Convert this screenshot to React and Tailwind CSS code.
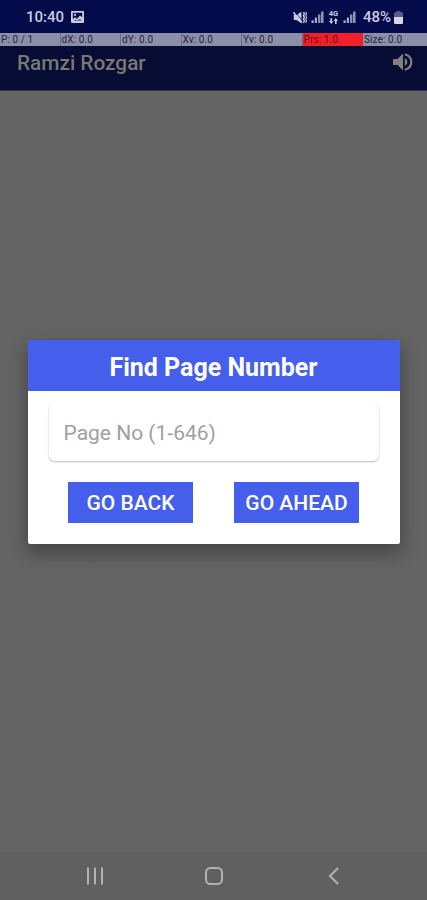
const pointerStats = [
  { label: "P: 0 / 1" },
  { label: "dX: 0.0" },
  { label: "dY: 0.0" },
  { label: "Xv: 0.0" },
  { label: "Yv: 0.0" },
  { label: "Prs: 1.0", active: true },
  { label: "Size: 0.0" },
];

const ImageIcon = () => (
  <svg className="ml-[7px] w-[13px] h-[12px]" viewBox="0 0 13 12">
    <rect width="13" height="12" rx="1" fill="#c9cce0" />
    <path d="M1.8 1.8h9.4v4.4L9 4.6 6 8 4 6.3 1.8 8.2z" fill="#050c49" />
    <rect x="3" y="2.8" width="2" height="2" fill="#c9cce0" />
    <path d="M2.6 10l2-1.6 1.5 1L9 7.4l1.8 2.6z" fill="#050c49" opacity="0.5" />
  </svg>
);

const MuteVibrateIcon = () => (
  <svg className="w-[14px] h-[13px]" viewBox="0 0 14 13" fill="none">
    <path d="M0.8 4h2.7L8.4 0.8v11.4L3.5 9H0.8z" fill="#c9cce0" />
    <path d="M0.4 1.2l8.6 10.6" stroke="#c9cce0" strokeWidth="1.6" />
    <path d="M1.8 0.6l7.4 9" stroke="#030b4b" strokeWidth="0.7" />
    <path d="M10.4 1l1 1.8-1 1.8 1 1.8-1 1.8 1 1.8-1 1.8" stroke="#c9cce0" strokeWidth="1.4" />
    <path d="M12.7 1l0.8 1.8-0.8 1.8 0.8 1.8-0.8 1.8 0.8 1.8-0.8 1.8" stroke="#c9cce0" strokeWidth="1.1" />
  </svg>
);

const SignalIcon = () => (
  <svg className="w-[13px] h-[12px]" viewBox="0 0 13 12">
    <path d="M0.5 9.3h2.2V12H0.5zM3.8 6.5h2.2V12H3.8z" fill="#a6aac5" />
    <path d="M7 3.5h2.4V12H7zM10 0.5h2.6V12H10z" fill="#8c91b0" />
  </svg>
);

const DataIcon = () => (
  <div className="w-[11px] h-[13px] flex flex-col items-center">
    <span className="text-[7.5px] leading-[6px] font-bold">4G</span>
    <svg className="w-[9px] h-[6px] mt-[1px]" viewBox="0 0 9 6" fill="#c9cce0">
      <path d="M1.4 0h1.6v3h1.4L2.2 6 0 3h1.4zM6 6h1.6V3H9L6.8 0 4.6 3H6z" />
    </svg>
  </div>
);

const BatteryIcon = () => (
  <svg className="w-[9px] h-[13px]" viewBox="0 0 9 13">
    <path d="M2.5 0h4v1.3H8q1 0 1 1V6H0V2.3q0-1 1-1h1.5z" fill="#555b83" />
    <path d="M0 6h9v6q0 1-1 1H1q-1 0-1-1z" fill="#d5d7e6" />
  </svg>
);

const VolumeIcon = () => (
  <svg className="w-[20px] h-[18px]" viewBox="0 0 20 18">
    <path d="M0 6h4.5L10 0.6v16.8L4.5 12H0z" fill="#7f817d" />
    <path d="M11.8 5v8q2.6-1.2 2.6-4t-2.6-4z" fill="#7f817d" />
    <path d="M11.8 1.2q6.5 1.7 6.5 7.8t-6.5 7.8" fill="none" stroke="#7f817d" strokeWidth="2.2" />
  </svg>
);

const StatusBar = () => (
  <div className="h-[33px] shrink-0 bg-[#030b4b] flex items-center justify-between pl-[26px] pr-[24px] pt-[1px] text-[#c9cce0]">
    <div className="flex items-center">
      <span className="text-[15px] leading-none font-medium w-[38px]">10:40</span>
      <ImageIcon />
    </div>
    <div className="flex items-center">
      <MuteVibrateIcon />
      <span className="w-[4px]" />
      <SignalIcon />
      <span className="w-[4px]" />
      <DataIcon />
      <span className="w-[4px]" />
      <SignalIcon />
      <span className="ml-[7px] w-[31px] text-[15px] leading-none font-medium whitespace-nowrap">48%</span>
      <BatteryIcon />
    </div>
  </div>
);

const FindPageDialog = () => (
  <div className="w-[372px] h-[204px] bg-white rounded-[2px] shadow-[0_8px_18px_2px_rgba(0,0,0,0.3)]">
    <div className="h-[51px] bg-[#455fec] rounded-t-[1px] flex items-center justify-center pt-[4px]">
      <h2 className="text-[25px] leading-none font-bold text-white">Find Page Number</h2>
    </div>

    <div className="pt-[12px] px-[21px]">
      <input
        type="text"
        placeholder="Page No (1-646)"
        className="block w-full h-[58px] px-[15px] pt-[1px] rounded-[6px] bg-white text-[21px] text-[#a0a0a0] placeholder:text-[#a0a0a0] outline-none shadow-[0_1px_2px_rgba(0,0,0,0.28)]"
      />
    </div>

    <div className="mt-[21px] flex justify-center gap-[41px]">
      <button className="w-[125px] h-[41px] pt-[3px] bg-[#455fec] text-white text-[21px] font-medium whitespace-nowrap">GO BACK</button>
      <button className="w-[125px] h-[41px] pt-[3px] bg-[#455fec] text-white text-[21px] font-medium whitespace-nowrap">GO AHEAD</button>
    </div>
  </div>
);

const App = () => {
  return (
    <div className="w-[427px] h-[900px] overflow-hidden flex flex-col bg-[#646464] font-[Roboto,sans-serif]">
      <StatusBar />

      {/* Pointer location strip */}
      <div className="h-[13px] shrink-0 flex bg-[#8d8ea8] text-[10px] leading-[14px] tracking-[0.1px] text-[#25263a]">
        {pointerStats.map((stat) => (
          <div
            key={stat.label}
            className={`w-[60.5px] shrink-0 pl-[1px] border-r whitespace-nowrap last:border-r-0 last:w-auto ${
              stat.active ? "bg-[#ee2029] border-[#ee2029] text-[#6e0f1c]" : "border-[#6c6d89]"
            }`}
          >
            {stat.label}
          </div>
        ))}
      </div>

      {/* App bar */}
      <div className="h-[45px] shrink-0 bg-[#060c33] border-b border-[#33374e] flex justify-between pl-[17px] pr-[14px]">
        <h1 className="pt-[7px] text-[20.8px] leading-[20px] font-medium text-[#777975]">Ramzi Rozgar</h1>
        <div className="pt-[7px]">
          <VolumeIcon />
        </div>
      </div>

      <div className="flex-1 pt-[249px] flex flex-col items-center">
        <FindPageDialog />
        <span className="mt-[17px] ml-[91px] self-start w-[2px] h-[2px] bg-[#853f50]" />
      </div>

      {/* Navigation bar */}
      <div className="h-[48px] shrink-0 bg-[#606060] flex items-center justify-center">
        <svg className="w-[260px] h-[20px]" viewBox="0 0 260 20" fill="none" stroke="#b2b2b2" strokeWidth="2">
          <path d="M4 1.5v17M11 1.5v17M18 1.5v17" />
          <rect x="122" y="2" width="16" height="16" rx="4.5" />
          <path d="M254 2l-8 8 8 8" />
        </svg>
      </div>
    </div>
  );
};

export default App;
